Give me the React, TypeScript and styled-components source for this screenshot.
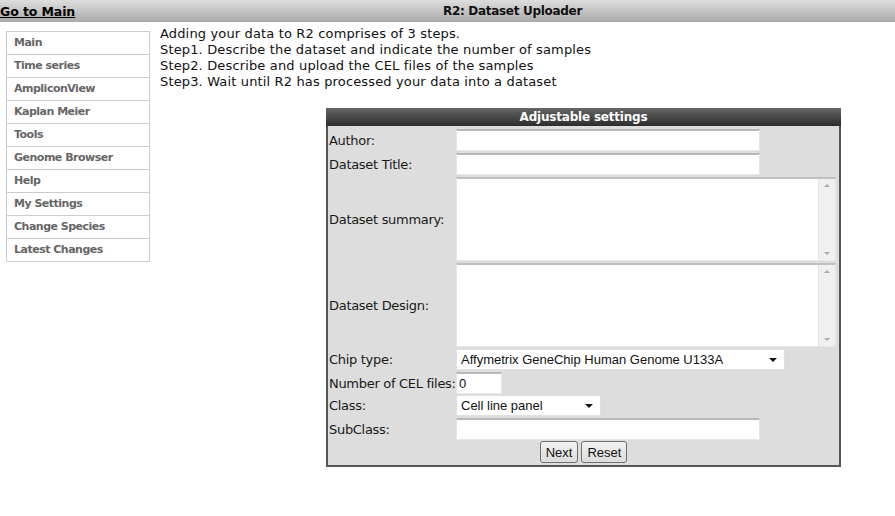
import styled, { createGlobalStyle } from "styled-components";

const GlobalStyle = createGlobalStyle`
  html, body {
    margin: 0;
    padding: 0;
    background: #fff;
  }
  body {
    font-family: "DejaVu Sans", Verdana, sans-serif;
    font-size: 13px;
    color: #111;
  }
`;

const Header = styled.div`
  height: 22px;
  display: grid;
  grid-template-columns: 130px 1fr;
  align-items: center;
  background: linear-gradient(to bottom, #dedede, #aaaaaa);
`;
const MainLink = styled.a`
  font-weight: bold;
  font-size: 12.5px;
  letter-spacing: -0.1px;
  color: #000;
  text-decoration: underline;
`;
const PageTitle = styled.div`
  font-weight: bold;
  font-size: 12px;
  letter-spacing: -0.3px;
  color: #111;
  text-align: center;
`;

const Body = styled.div`
  display: flex;
  align-items: flex-start;
  padding: 9px 0 0 6px;
  gap: 10px;
`;

const Menu = styled.ul`
  list-style: none;
  margin: 0;
  padding: 0;
  width: 142px;
  border: 1px solid #cccccc;
  border-bottom: none;
  flex-shrink: 0;
`;
const MenuItem = styled.li`
  height: 22px;
  line-height: 22px;
  border-bottom: 1px solid #cccccc;
  padding-left: 7px;
  font-size: 11px;
  letter-spacing: -0.5px;
  font-weight: bold;
  color: #666;
`;

const Content = styled.div`
  flex: 1;
`;
const Intro = styled.div`
  line-height: 16px;
  font-size: 13px;
  letter-spacing: 0.15px;
  margin-top: -5px;
`;

const FormBox = styled.div`
  margin: 18px 0 0 166px;
  width: 511px;
  border: 2px solid #555;
  border-top: none;
  background: #dddddd;
`;
const FormHead = styled.div`
  height: 18px;
  line-height: 18px;
  background: linear-gradient(to bottom, #666, #2c2c2c);
  color: #fff;
  font-weight: bold;
  font-size: 12px;
  letter-spacing: -0.2px;
  text-align: center;
  margin: 0 -2px;
`;
const FormRows = styled.div`
  padding: 2px 0 2px 0;
`;
const Row = styled.div<{ $h: number }>`
  display: grid;
  grid-template-columns: 128px 1fr;
  align-items: center;
  height: ${(p) => p.$h}px;
  padding: 1px 0;
`;
const Label = styled.div`
  padding-left: 1px;
  font-size: 13px;
  letter-spacing: -0.3px;
  color: #1a1a1a;
  white-space: nowrap;
`;
const TextInput = styled.div<{ $w: number }>`
  width: ${(p) => p.$w}px;
  height: 22px;
  box-sizing: border-box;
  background: #fff;
  border: 1px solid #e6e6e6;
  border-top: 2px solid #b8b8b8;
  font-family: "Liberation Sans", Arial, sans-serif;
  font-size: 13px;
  line-height: 19px;
  padding-left: 2px;
`;
const TextArea = styled.div`
  width: 380px;
  height: 100%;
  box-sizing: border-box;
  background: #fff;
  border: 1px solid #e6e6e6;
  border-top: 2px solid #c0c0c0;
  display: flex;
  justify-content: flex-end;
`;
const ScrollTrack = styled.div`
  width: 16px;
  background: #f0f0f0;
  border-left: 1px solid #e4e4e4;
  display: flex;
  flex-direction: column;
  justify-content: space-between;
  align-items: center;
  padding: 5px 0;
`;
const Arrow = styled.div<{ $up?: boolean }>`
  width: 0;
  height: 0;
  border-left: 3px solid transparent;
  border-right: 3px solid transparent;
  ${(p) =>
    p.$up ? "border-bottom: 3px solid #aaa;" : "border-top: 3px solid #aaa;"}
`;
const Select = styled.div<{ $w: number }>`
  width: ${(p) => p.$w}px;
  height: 21px;
  box-sizing: border-box;
  background: #fff;
  border: 1px solid #e0e0e0;
  display: flex;
  align-items: center;
  justify-content: space-between;
  padding: 0 7px 0 4px;
  font-family: "Liberation Sans", Arial, sans-serif;
  font-size: 13px;
`;
const Caret = styled.span`
  width: 0;
  height: 0;
  border-left: 4px solid transparent;
  border-right: 4px solid transparent;
  border-top: 4px solid #111;
`;
const Buttons = styled.div`
  display: flex;
  justify-content: center;
  gap: 3px;
  padding: 1px 0 0 0;
  height: 22px;
`;
const Button = styled.button`
  height: 22px;
  padding: 0 5px;
  font-family: "Liberation Sans", Arial, sans-serif;
  font-size: 13px;
  color: #111;
  border: 1px solid #707070;
  border-radius: 3px;
  background: linear-gradient(to bottom, #f2f2f2, #dcdcdc);
`;

const menu = [
  "Main",
  "Time series",
  "AmpliconView",
  "Kaplan Meier",
  "Tools",
  "Genome Browser",
  "Help",
  "My Settings",
  "Change Species",
  "Latest Changes",
];

function Area() {
  return (
    <TextArea>
      <ScrollTrack>
        <Arrow $up />
        <Arrow />
      </ScrollTrack>
    </TextArea>
  );
}

export default function App() {
  return (
    <>
      <GlobalStyle />
      <Header>
        <MainLink href="#">Go to Main</MainLink>
        <PageTitle>R2: Dataset Uploader</PageTitle>
      </Header>
      <Body>
        <Menu>
          {menu.map((m) => (
            <MenuItem key={m}>{m}</MenuItem>
          ))}
        </Menu>
        <Content>
          <Intro>
            Adding your data to R2 comprises of 3 steps.
            <br />
            Step1. Describe the dataset and indicate the number of samples
            <br />
            Step2. Describe and upload the CEL files of the samples
            <br />
            Step3. Wait until R2 has processed your data into a dataset
          </Intro>
          <FormBox>
            <FormHead>Adjustable settings</FormHead>
            <FormRows>
              <Row $h={22}>
                <Label>Author:</Label>
                <TextInput $w={304} />
              </Row>
              <Row $h={22}>
                <Label>Dataset Title:</Label>
                <TextInput $w={304} />
              </Row>
              <Row $h={84}>
                <Label>Dataset summary:</Label>
                <Area />
              </Row>
              <Row $h={84}>
                <Label>Dataset Design:</Label>
                <Area />
              </Row>
              <Row $h={21}>
                <Label>Chip type:</Label>
                <Select $w={329}>
                  Affymetrix GeneChip Human Genome U133A
                  <Caret />
                </Select>
              </Row>
              <Row $h={21}>
                <Label>Number of CEL files:</Label>
                <TextInput $w={46}>0</TextInput>
              </Row>
              <Row $h={21}>
                <Label>Class:</Label>
                <Select $w={145}>
                  Cell line panel
                  <Caret />
                </Select>
              </Row>
              <Row $h={21}>
                <Label>SubClass:</Label>
                <TextInput $w={304} />
              </Row>
              <Buttons>
                <Button>Next</Button>
                <Button>Reset</Button>
              </Buttons>
            </FormRows>
          </FormBox>
        </Content>
      </Body>
    </>
  );
}
